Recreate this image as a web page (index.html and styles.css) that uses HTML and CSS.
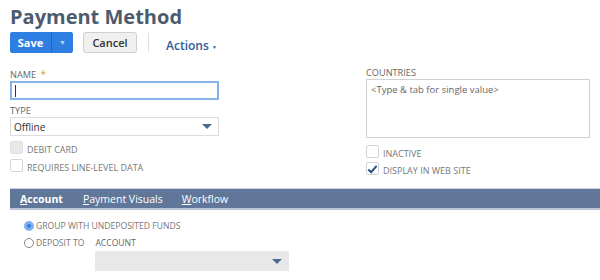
FILE: index.html
```html
<!DOCTYPE html>
<html lang="en">
<head>
  <meta charset="UTF-8" />
  <title>Payment Method</title>
  <link rel="stylesheet" href="styles.css">
</head>
<body>

  <h1 class="page-title">Payment Method</h1>

  <div class="toolbar">
    <div class="split-btn">
      <button class="save">Save</button>
      <button class="save-more">&#9660;</button>
    </div>
    <button class="cancel">Cancel</button>
    <span class="divider"></span>
    <span class="actions">Actions <span class="caret">&#9660;</span></span>
  </div>

  <div class="fields">
    <div class="col left">
      <div class="form-group">
        <label>Name <span class="required">*</span></label>
        <div class="text-input focused"><span class="cursor"></span></div>
      </div>
      <div class="form-group">
        <label>Type</label>
        <div class="select">
          <span>Offline</span>
          <span class="arrow"></span>
        </div>
      </div>
      <div class="check-row">
        <span class="box disabled"></span>
        <span class="check-label">Debit Card</span>
      </div>
      <div class="check-row">
        <span class="box"></span>
        <span class="check-label">Requires Line-Level Data</span>
      </div>
    </div>

    <div class="col right">
      <div class="form-group">
        <label>Countries</label>
        <div class="textarea">&lt;Type &amp; tab for single value&gt;</div>
      </div>
      <div class="check-row">
        <span class="box"></span>
        <span class="check-label">Inactive</span>
      </div>
      <div class="check-row">
        <span class="box checked">
          <svg width="12" height="10" viewBox="0 0 12 10"><path d="M1.5 5.5 L4.5 8.5 L10.5 1.5" fill="none" stroke="#2b4f86" stroke-width="2.2"/></svg>
        </span>
        <span class="check-label">Display in Web Site</span>
      </div>
    </div>
  </div>

  <div class="tabs">
    <span class="tab active"><u>A</u>ccount</span>
    <span class="tab"><u>P</u>ayment Visuals</span>
    <span class="tab"><u>W</u>orkflow</span>
  </div>

  <div class="tab-body">
    <div class="radio-row">
      <span class="radio on"></span>
      <span class="check-label">Group with Undeposited Funds</span>
    </div>
    <div class="radio-row">
      <span class="radio"></span>
      <span class="check-label">Deposit To</span>
      <div class="account">
        <label>Account</label>
        <div class="select grey"><span class="arrow"></span></div>
      </div>
    </div>
  </div>

</body>
</html>
```

FILE: styles.css
```css
* {
  box-sizing: border-box;
  font-family: 'Open Sans', sans-serif;
}

body {
  margin: 0;
  padding: 5px 0 0 10px;
  background: #fff;
  color: #333;
  width: 600px;
  height: 280px;
  overflow: hidden;
}

.page-title {
  margin: 0;
  font-size: 20px;
  font-weight: bold;
  color: #4d5b6e;
  line-height: 24px;
}

.toolbar {
  display: flex;
  align-items: center;
  margin-top: 3px;
  height: 21px;
}

.split-btn {
  display: flex;
  height: 21px;
  border-radius: 3px;
  overflow: hidden;
  background: #2f7fe3;
}

.split-btn button,
.cancel {
  border: none;
  font-size: 11px;
  font-weight: bold;
  padding: 0;
  height: 21px;
}

.save {
  width: 42px;
  background: #2f7fe3;
  color: #fff;
  border-right: 1px solid #1f64c0 !important;
}

.save-more {
  width: 21px;
  background: #2f7fe3;
  color: #b9d3f5;
  font-size: 7px !important;
}

.cancel {
  margin-left: 10px;
  width: 54px;
  background: #f0f0f0;
  border: 1px solid #cfcfcf;
  border-radius: 3px;
  color: #333;
  font-weight: 600;
}

.divider {
  width: 1px;
  height: 19px;
  background: #e0e0e0;
  margin-left: 11px;
}

.actions {
  margin-left: 17px;
  margin-top: 5px;
  color: #2f5b9a;
  font-size: 12px;
  font-weight: 600;
}

.caret {
  font-size: 5px;
  vertical-align: middle;
}

.fields {
  display: flex;
  margin-top: 16px;
}

.col.left {
  width: 209px;
}

.col.right {
  width: 224px;
  margin-left: 147px;
  margin-top: -2px;
}

.form-group {
  margin-bottom: 5px;
}

label {
  display: block;
  font-size: 9.2px;
  text-transform: uppercase;
  color: #666;
  line-height: 11px;
  margin-bottom: 1px;
}

.required {
  color: #e09a2a;
  font-size: 10px;
  margin-left: 2px;
}

.text-input {
  height: 19px;
  border: 1px solid #c8c8c8;
  display: flex;
  align-items: center;
  padding-left: 3px;
}

.text-input.focused {
  border: 2px solid #86b3ea;
}

.cursor {
  width: 1px;
  height: 12px;
  background: #333;
}

.select {
  height: 19px;
  border: 1px solid #dcdcdc;
  display: flex;
  align-items: center;
  justify-content: space-between;
  padding: 0 4px 0 3px;
  font-size: 10px;
  color: #333;
}

.arrow {
  width: 0;
  height: 0;
  border-left: 5px solid transparent;
  border-right: 5px solid transparent;
  border-top: 5px solid #4d6990;
  margin-right: 2px;
}

.select.grey {
  background: #e8e8e8;
  border-color: #e8e8e8;
  justify-content: flex-end;
  height: 20px;
}

.textarea {
  height: 59px;
  border: 1px solid #d0d0d0;
  font-size: 9.5px;
  color: #666;
  padding: 3px 4px;
  margin-bottom: 7px;
}

.check-row,
.radio-row {
  display: flex;
  align-items: center;
  height: 13px;
  margin-bottom: 5px;
}

.col.right .check-row {
  margin-bottom: 4px;
}

.box {
  width: 13px;
  height: 13px;
  border: 1px solid #d4d4d4;
  border-radius: 2px;
  background: #fff;
  display: flex;
  align-items: center;
  justify-content: center;
}

.box.disabled {
  background: #e8e8e8;
  border-color: #e0e0e0;
}

.check-label {
  font-size: 9px;
  text-transform: uppercase;
  color: #777;
  margin-left: 4px;
  margin-top: 4px;
}

.tabs {
  display: flex;
  margin-top: 9px;
  height: 22px;
  background: #607799;
  border-top: 1px solid #c9d2de;
  border-bottom: 2px solid #b9c6d8;
  padding-left: 10px;
  align-items: center;
  position: relative;
}

.tab {
  font-size: 10.5px;
  color: #fff;
  margin-right: 19px;
  position: relative;
}

.tab.active {
  font-weight: bold;
  margin-right: 20px;
}

.tab.active::after {
  content: "";
  position: absolute;
  left: 17px;
  bottom: -8px;
  border-left: 4px solid transparent;
  border-right: 4px solid transparent;
  border-bottom: 4px solid #fff;
}

.tab-body {
  padding: 10px 0 0 14px;
}

.radio-row {
  margin-bottom: 4px;
  align-items: flex-start;
}

.radio {
  width: 10px;
  height: 10px;
  border: 1px solid #888;
  border-radius: 50%;
  background: #fff;
  margin-top: 1px;
}

.radio.on {
  border: 3px solid #7fb0ee;
  background: #2f7fe3;
}

.radio-row .check-label {
  margin-left: 2px;
  margin-top: 0;
  font-size: 8.6px;
}

.account {
  margin-left: 11px;
  width: 194px;
}

.account label {
  margin-top: 1px;
  font-size: 8.6px;
  margin-bottom: 2px;
}
```
